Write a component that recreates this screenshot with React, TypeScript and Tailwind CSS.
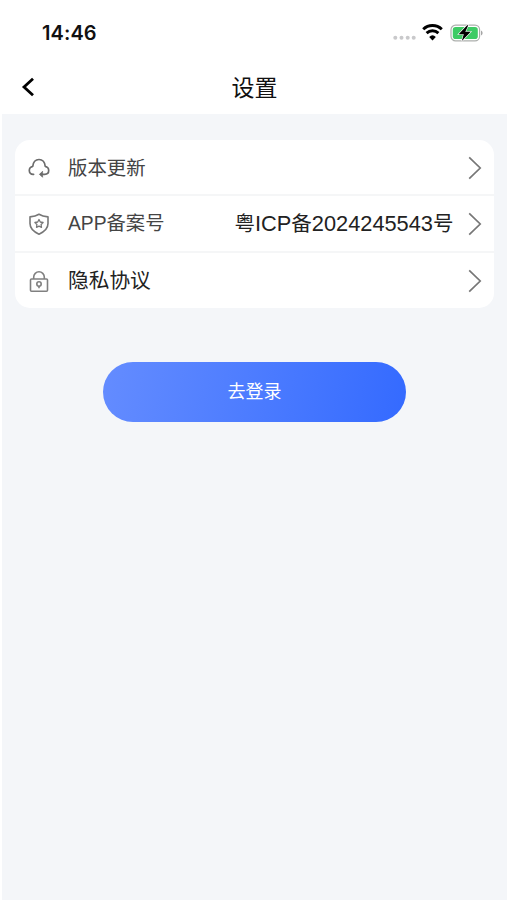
import type { ReactNode } from "react";

function StatusBar() {
  return (
    <div className="flex h-[60px] items-start justify-between pt-[20px] pl-[42px] pr-[23px]">
      <span className="font-['Inter',sans-serif] text-[20px] leading-[26px] font-semibold tracking-[0.1px] text-[#111]">
        14:46
      </span>
      <div className="flex h-[25px] items-center">
        <svg width="23" height="25" viewBox="0 0 23 25" fill="#c9c9cb">
          <circle cx="2.3" cy="17.8" r="2" />
          <circle cx="8.5" cy="17.8" r="2" />
          <circle cx="14.7" cy="17.8" r="2" />
          <circle cx="20.7" cy="17.8" r="2" />
        </svg>
        <svg className="ml-[6px]" width="21" height="25" viewBox="0 0 21 25" fill="none" stroke="#000" strokeWidth="2.9">
          <path d="M1.2 9.2a13.4 13.4 0 0 1 18.6 0" />
          <path d="M4.6 13.1a8.5 8.5 0 0 1 11.8 0" />
          <path d="M10.5 20.4l-3.3-3.5a4.8 4.8 0 0 1 6.6 0z" fill="#000" stroke="none" />
        </svg>
        <svg className="ml-[7px]" width="34" height="25" viewBox="0 0 34 25">
          <rect x="1" y="5.2" width="28.6" height="15.6" rx="4.6" fill="#fff" stroke="#adb0ad" strokeWidth="1.2" />
          <rect x="2.8" y="7" width="25" height="12" rx="2.8" fill="#3ecb65" />
          <path d="M31 10.5v5c1-.4 1.6-1.4 1.6-2.5s-.6-2.1-1.6-2.5z" fill="#a5a5a5" />
          <path d="M17.2 5.2L8.6 14.2h5.2l-2 6.8 8.9-9.2h-5.4l3-6.6z" fill="#000" stroke="#fff" strokeWidth="1.2" paintOrder="stroke" />
        </svg>
      </div>
    </div>
  );
}

function Chevron() {
  return (
    <svg width="16" height="24" viewBox="0 0 16 24" fill="none" stroke="#777" strokeWidth="1.7">
      <path d="M2.2 1.4L13.2 12 2.2 22.6" />
    </svg>
  );
}

function CloudIcon() {
  return (
    <svg width="24" height="24" viewBox="0 0 24 24" fill="none" stroke="#6c6c6c" strokeWidth="1.7" strokeLinecap="round" strokeLinejoin="round">
      <path d="M6.6 18.3C3.7 18.5 2.3 16.8 2.3 14.5c0-2.2 1.5-3.8 3.5-4.2C6.1 6.4 8.5 3.5 12 3.5s5.9 2.9 6.2 6.8c2 .4 3.5 2 3.5 4.2 0 2.4-1.7 3.8-4 3.8h-4.3" />
      <path d="M15.3 15.5l-2.7 2.8 2.7 2.7z" fill="#6c6c6c" strokeWidth="0.8" />
    </svg>
  );
}

function ShieldIcon() {
  return (
    <svg width="24" height="24" viewBox="0 0 24 24" fill="none" stroke="#777" strokeWidth="1.6" strokeLinejoin="round">
      <path d="M12 2.3c2.6 1.6 5.4 2.3 9 2.6v6.7c0 5-3.5 8.2-9 10.6-5.5-2.4-9-5.6-9-10.6V4.9c3.6-.3 6.4-1 9-2.6z" />
      <path strokeWidth="1.3" d="M12 7.5l1.3 2.5 2.8.5-2 2 .4 2.8-2.5-1.2-2.5 1.2.4-2.8-2-2 2.8-.5z" />
    </svg>
  );
}

function LockIcon() {
  return (
    <svg width="24" height="24" viewBox="0 0 24 24" fill="none" stroke="#808080" strokeWidth="1.6" strokeLinejoin="round">
      <path d="M6.7 10V8.1a5.3 5.3 0 0 1 10.6 0V10" />
      <rect x="3.5" y="10" width="17" height="12.3" rx="1" />
      <circle cx="12" cy="15" r="2.2" />
      <path d="M12 17.2v2" />
    </svg>
  );
}

type RowProps = { icon: ReactNode; label: string; labelClass: string; value?: ReactNode; className: string };

function Row({ icon, label, labelClass, value, className }: RowProps) {
  return (
    <div className={`flex items-center pr-[11px] pl-[12px] ${className}`}>
      {icon}
      <span className={`ml-[17.5px] whitespace-nowrap ${labelClass}`}>{label}</span>
      <span className="mr-[13px] ml-auto pt-[2px] text-[20.5px] whitespace-nowrap text-[#222]">{value}</span>
      <Chevron />
    </div>
  );
}

function IcpNumber() {
  return (
    <>
      粤<span className="text-[21.8px]">ICP</span>备<span className="text-[21.8px]">2024245543</span>号
    </>
  );
}

export default function App() {
  return (
    <div className="flex h-[900px] w-full flex-col overflow-hidden bg-white font-['Liberation_Sans','Noto_Sans_CJK_SC',sans-serif]">
      <StatusBar />
      <header className="grid h-[54px] grid-cols-[1fr_auto_1fr] items-center pl-[20px]">
        <svg width="18" height="24" viewBox="0 0 18 24" fill="none" stroke="#000" strokeWidth="2.8">
          <path d="M13 3.7L4 12l9 8.3" />
        </svg>
        <h1 className="-ml-[18px] pt-[2px] text-[23px] leading-[52px] font-normal text-[#111]">设置</h1>
      </header>
      <main className="ml-[2px] flex flex-1 flex-col items-center bg-[#f4f6f9] pt-[26px]">
        <section className="mr-[1px] w-[479px] overflow-hidden rounded-[15px] bg-white">
          <Row className="h-[54px] pt-px" icon={<CloudIcon />} label="版本更新" labelClass="pt-[2px] text-[19.4px] text-[#444]" />
          <Row
            className="h-[57px] border-t-2 border-[#f5f6f7]"
            icon={<ShieldIcon />}
            label="APP备案号"
            labelClass="pt-[2px] text-[19.3px] text-[#444]"
            value={<IcpNumber />}
          />
          <Row className="h-[57px] border-t-2 border-[#f5f6f7]" icon={<LockIcon />} label="隐私协议" labelClass="pt-px text-[20.7px] text-[#222]" />
        </section>
        <button className="mt-[54px] h-[60px] w-[303px] rounded-full bg-linear-100 from-[#648cff] to-[#346aff] text-[18px] text-white">
          去登录
        </button>
      </main>
    </div>
  );
}
